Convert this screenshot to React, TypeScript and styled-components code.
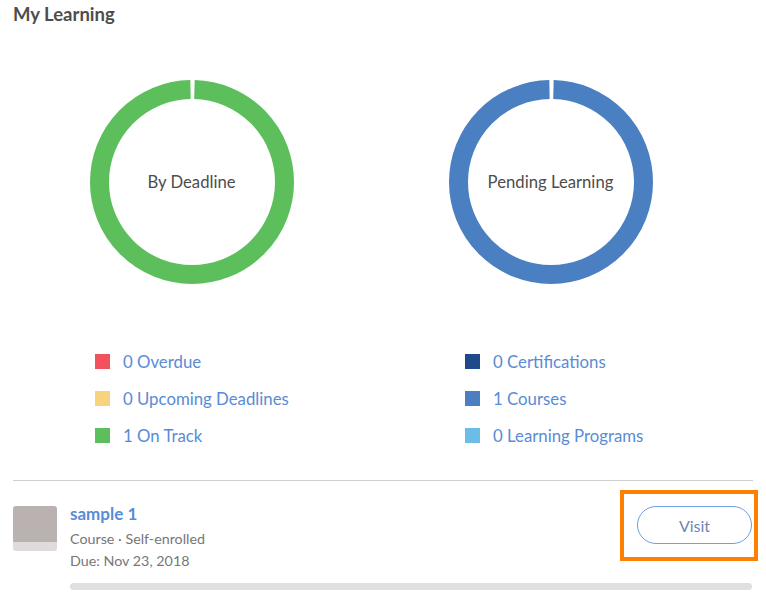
import React from "react";
import styled, { createGlobalStyle } from "styled-components";

const GlobalStyle = createGlobalStyle`
  html, body {
    margin: 0;
    padding: 0;
    background: #ffffff;
    font-family: "Lato", "Open Sans", sans-serif;
  }
`;

const COLORS = {
  green: "#5cbf5c",
  blue: "#4a7fc1",
  red: "#f2525b",
  yellow: "#f8d27c",
  navy: "#1e4a89",
  sky: "#69bde7",
  link: "#5a8bd6",
  text: "#4d4d4d",
  muted: "#777777",
};

const Page = styled.div`
  width: 766px;
  height: 614px;
  padding: 3px 13px 0 13px;
  box-sizing: border-box;
  overflow: hidden;
`;

const Title = styled.h2`
  margin: 0;
  font-size: 18.5px;
  font-weight: 700;
  color: ${COLORS.text};
  line-height: 22px;
`;

const Charts = styled.div`
  display: grid;
  grid-template-columns: 359px 359px;
  margin: 55px 0 0 -1px;
`;

const ChartCell = styled.div`
  display: flex;
  justify-content: center;
`;

const DonutBox = styled.div`
  position: relative;
  width: 204px;
  height: 204px;
`;

const DonutLabel = styled.div`
  position: absolute;
  inset: 0;
  display: flex;
  align-items: center;
  justify-content: center;
  font-size: 16.7px;
  color: ${COLORS.text};
`;

const Legend = styled.div`
  display: grid;
  grid-template-columns: 370px 370px;
  margin: 67px 0 0 82px;
`;

const LegendColumn = styled.ul`
  list-style: none;
  margin: 0;
  padding: 0;
  display: flex;
  flex-direction: column;
  gap: 16px;
`;

const LegendItem = styled.li`
  display: flex;
  align-items: center;
  gap: 13px;
  height: 21px;
  font-size: 16.8px;
  color: ${COLORS.link};
`;

const Swatch = styled.span<{ $color: string }>`
  width: 15px;
  height: 15px;
  background: ${({ $color }) => $color};
  flex: none;
`;

const Divider = styled.hr`
  border: 0;
  border-top: 1px solid #cfcfcf;
  margin: 34px 0 0 0;
`;

const ItemRow = styled.div`
  display: flex;
  gap: 13px;
  margin-top: 25px;
`;

const Thumb = styled.div`
  width: 44px;
  height: 45px;
  border-radius: 3px;
  flex: none;
  background: linear-gradient(#bab1b1 0 80%, #e0dbdb 80% 100%);
`;

const ItemBody = styled.div`
  flex: 1;
  display: flex;
  flex-direction: column;
`;

const ItemHeader = styled.div`
  display: flex;
  justify-content: space-between;
  align-items: flex-start;
`;

const ItemText = styled.div`
  display: flex;
  flex-direction: column;
`;

const ItemName = styled.a`
  font-size: 17px;
  font-weight: 700;
  color: ${COLORS.link};
  line-height: 20px;
  margin-top: -2px;
`;

const ItemMeta = styled.div<{ $first?: boolean }>`
  font-size: 14.3px;
  color: ${COLORS.muted};
  line-height: 22px;
  margin-top: ${({ $first }) => ($first ? 4 : 0)}px;
`;

const Highlight = styled.div`
  border: 4px solid #ff8000;
  padding: 12px 2px 13px 13px;
  margin: -16px -5px 0 0;
`;

const VisitButton = styled.button`
  width: 115px;
  height: 38px;
  border: 1.5px solid #6f9fe0;
  border-radius: 19px;
  background: #ffffff;
  color: #6f86b3;
  font-family: inherit;
  font-size: 16px;
  display: block;
`;

const Progress = styled.div`
  height: 7px;
  border-radius: 4px;
  background: #e0e0e0;
  margin: 11px 1px 0 0;
`;

const Donut = ({ color, label }: { color: string; label: string }) => {
  const r = 92.5;
  const c = 2 * Math.PI * r;
  const gap = 5;
  return (
    <DonutBox>
      <svg width="204" height="204" viewBox="0 0 204 204">
        <circle
          cx="102"
          cy="102"
          r={r}
          fill="none"
          stroke={color}
          strokeWidth="19"
          strokeDasharray={`${c - gap} ${gap}`}
          strokeDashoffset={-gap / 2}
          transform="rotate(-90 102 102)"
        />
      </svg>
      <DonutLabel>{label}</DonutLabel>
    </DonutBox>
  );
};

const deadlineLegend = [
  { color: COLORS.red, text: "0 Overdue" },
  { color: COLORS.yellow, text: "0 Upcoming Deadlines" },
  { color: COLORS.green, text: "1 On Track" },
];

const pendingLegend = [
  { color: COLORS.navy, text: "0 Certifications" },
  { color: COLORS.blue, text: "1 Courses" },
  { color: COLORS.sky, text: "0 Learning Programs" },
];

export default function App() {
  return (
    <>
      <GlobalStyle />
      <Page>
        <Title>My Learning</Title>
        <Charts>
          <ChartCell>
            <Donut color={COLORS.green} label="By Deadline" />
          </ChartCell>
          <ChartCell>
            <Donut color={COLORS.blue} label="Pending Learning" />
          </ChartCell>
        </Charts>
        <Legend>
          {[deadlineLegend, pendingLegend].map((col, i) => (
            <LegendColumn key={i}>
              {col.map((item) => (
                <LegendItem key={item.text}>
                  <Swatch $color={item.color} />
                  {item.text}
                </LegendItem>
              ))}
            </LegendColumn>
          ))}
        </Legend>
        <Divider />
        <ItemRow>
          <Thumb />
          <ItemBody>
            <ItemHeader>
              <ItemText>
                <ItemName>sample 1</ItemName>
                <ItemMeta $first>Course · Self-enrolled</ItemMeta>
                <ItemMeta>Due: Nov 23, 2018</ItemMeta>
              </ItemText>
              <Highlight>
                <VisitButton>Visit</VisitButton>
              </Highlight>
            </ItemHeader>
            <Progress />
          </ItemBody>
        </ItemRow>
      </Page>
    </>
  );
}
